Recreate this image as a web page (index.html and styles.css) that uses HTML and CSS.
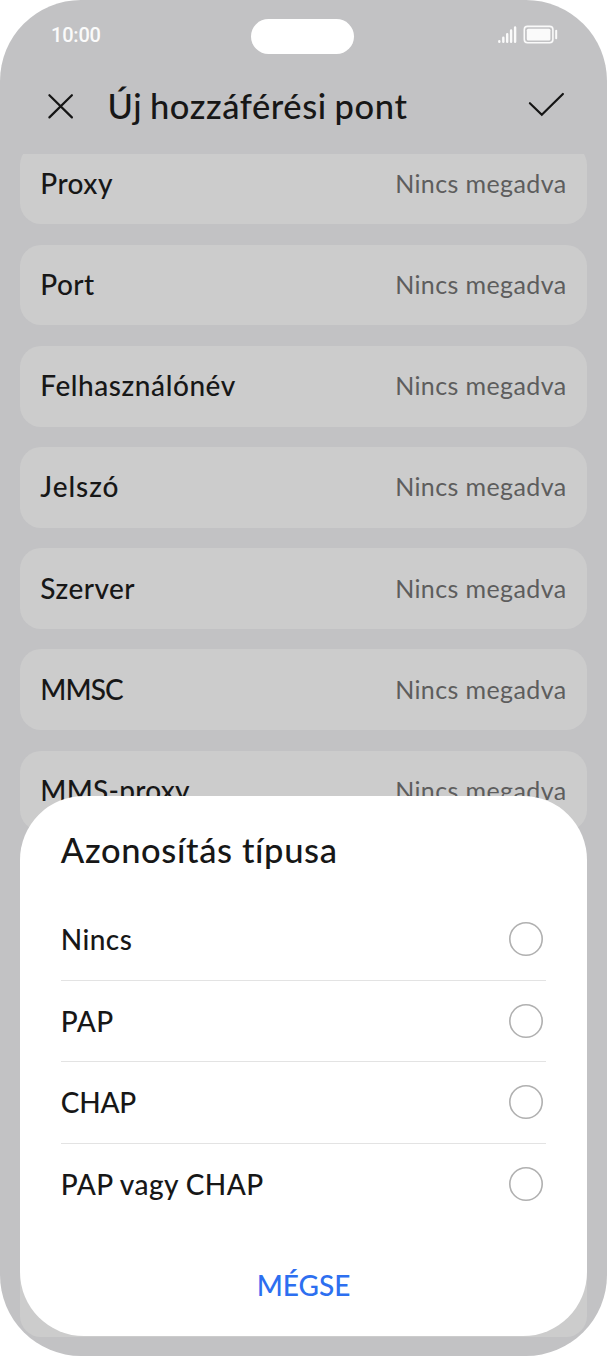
FILE: index.html
```html
<!DOCTYPE html>
<html lang="hu">
<head>
<meta charset="utf-8">
<title>Új hozzáférési pont</title>
<link rel="stylesheet" href="styles.css">
</head>
<body>
<div class="phone">
  <header class="status">
    <span class="clock">10:00</span>
    <span class="island"></span>
    <svg class="indicators" width="62" height="20" viewBox="0 0 62 20" fill="none" stroke="#fafafa" stroke-linecap="round">
      <g stroke-width="2.4"><path d="M3.3 16.2v.6M7.3 12.7v4.1M11.2 9.2v7.6M15.1 5.5v11.3M19.1 2.5v14.3"/></g>
      <rect x="28.3" y="1.4" width="28.6" height="16.4" rx="3.2" stroke-width="1.6"/>
      <rect x="30.8" y="3.7" width="23.6" height="11.8" rx="1.5" fill="#fafafa" stroke="none"/>
      <path d="M60.2 5.8v7.5" stroke-width="2"/>
    </svg>
  </header>
  <div class="toolbar">
    <svg class="close" width="28" height="28" viewBox="0 0 28 28" fill="none" stroke="#151515" stroke-width="2.2" stroke-linecap="round"><path d="M2.4 3.2 24.9 25.4M24.9 3.2 2.4 25.4"/></svg>
    <h1 class="title">Új hozzáférési pont</h1>
    <svg class="confirm" width="38" height="28" viewBox="0 0 38 28" fill="none" stroke="#151515" stroke-width="2.2" stroke-linecap="round"><path d="M1.9 12.2 13.8 23.8 34.9 3"/></svg>
  </div>
  <main class="list">
    <div class="card"><span class="label">Proxy</span><span class="value">Nincs megadva</span></div>
    <div class="card"><span class="label">Port</span><span class="value">Nincs megadva</span></div>
    <div class="card"><span class="label user">Felhasználónév</span><span class="value">Nincs megadva</span></div>
    <div class="card"><span class="label pass">Jelszó</span><span class="value">Nincs megadva</span></div>
    <div class="card"><span class="label">Szerver</span><span class="value">Nincs megadva</span></div>
    <div class="card"><span class="label mmsc">MMSC</span><span class="value">Nincs megadva</span></div>
    <div class="card"><span class="label mms">MMS-proxy</span><span class="value">Nincs megadva</span></div>
    <div class="card tall"></div>
  </main>
  <section class="sheet">
    <h2 class="sheet-title">Azonosítás típusa</h2>
    <div class="option"><span class="name">Nincs</span><svg class="radio" viewBox="0 0 34 34"><circle cx="17" cy="17" r="16.2"/></svg></div>
    <div class="option"><span class="name">PAP</span><svg class="radio" viewBox="0 0 34 34"><circle cx="17" cy="17" r="16.2"/></svg></div>
    <div class="option"><span class="name chap">CHAP</span><svg class="radio" viewBox="0 0 34 34"><circle cx="17" cy="17" r="16.2"/></svg></div>
    <div class="option"><span class="name">PAP vagy CHAP</span><svg class="radio" viewBox="0 0 34 34"><circle cx="17" cy="17" r="16.2"/></svg></div>
    <div class="cancel">MÉGSE</div>
  </section>
</div>
</body>
</html>
```
FILE: styles.css
```css
* { box-sizing: border-box; }
body { margin: 0; background: #fff; font-family: Lato, "Noto Sans", sans-serif; font-variant-ligatures: none; color: #171717; }
.phone { position: relative; width: 607px; height: 1356px; border-radius: 81px; background: #c2c2c4; overflow: hidden; display: flex; flex-direction: column; }
.status { height: 60px; flex: none; display: grid; grid-template-columns: 251px 103px 1fr; align-items: start; }
.clock { padding-left: 51px; margin-top: 23px; font: 500 20px/24px Roboto, sans-serif; letter-spacing: -.2px; color: #fafafa; }
.island { height: 35px; margin-top: 18.7px; border-radius: 18px; background: #fff; }
.indicators { margin: 25px 0 0 142px; }
.toolbar { height: 93.5px; flex: none; display: flex; align-items: flex-start; padding: 22px 41px 0 47px; }
.close { margin-top: 10px; }
.title { margin: 0 auto 0 32.5px; font-size: 34.5px; line-height: 48px; font-weight: 500; letter-spacing: .4px; word-spacing: -1.5px; white-space: nowrap; }
.title { letter-spacing: .58px; }
.confirm { margin-top: 9px; }
.list { flex: 1; min-height: 0; overflow: hidden; padding: 0 20.3px; display: flex; flex-direction: column; gap: 20.4px; }
.card { height: 80.8px; flex: none; display: flex; align-items: center; justify-content: space-between; padding: 0 20.5px 0 20px; border-radius: 21px; background: #ccc; }
.card:first-child { margin-top: -10px; }
.tall { height: 485px; }
.label, .name { font-size: 28px; line-height: 36px; font-weight: 500; letter-spacing: .45px; white-space: nowrap; }
.label { margin-top: -2px; }
.label.user { letter-spacing: .56px; }
.label.pass { letter-spacing: .95px; }
.label.mmsc { letter-spacing: -.9px; }
.label.mms { letter-spacing: .25px; }
.name { margin-top: -1px; }
.name.chap { letter-spacing: -.2px; }
.value { margin: -2px -.4px 0 0; font-size: 25px; line-height: 36px; letter-spacing: .4px; color: #5d5d5d; white-space: nowrap; }
.sheet { position: absolute; left: 20.3px; top: 796px; width: 566.4px; height: 539.7px; border-radius: 64px; background: #fff; padding: 30px 40.5px 0; }
.sheet-title { margin: 0 0 25.3px; font-size: 34.5px; line-height: 48px; font-weight: 500; letter-spacing: .63px; white-space: nowrap; }
.option { height: 81.6px; display: flex; align-items: center; justify-content: space-between; padding-right: 3.5px; border-bottom: 1px solid #e3e3e3; }
.option:nth-of-type(4) { border-bottom-color: transparent; }
.radio { width: 34px; height: 34px; margin-top: -1px; fill: none; stroke: #b0b0b0; stroke-width: 1.6px; }
.cancel { margin-top: 39px; text-align: center; font-size: 28px; line-height: 40px; font-weight: 500; color: #2d6ff0; }
```
